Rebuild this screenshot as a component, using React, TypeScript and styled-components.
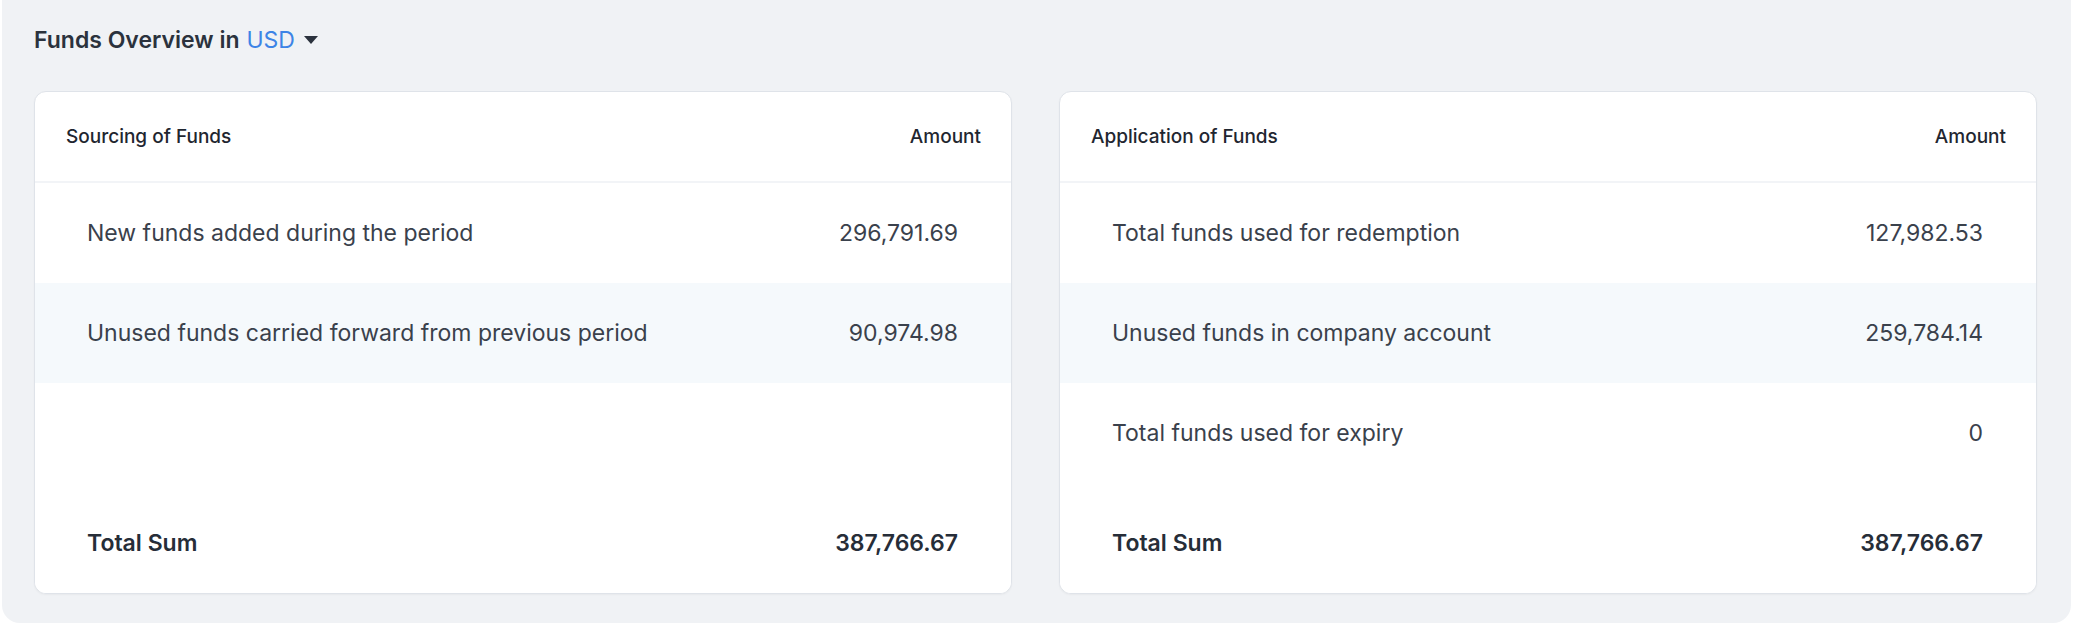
import React from "react";
import styled, { createGlobalStyle } from "styled-components";

const Global = createGlobalStyle`
  html, body { margin: 0; padding: 0; background: #fff; }
  body { font-family: Inter, "Noto Sans", sans-serif; color: #2b323d; }
`;

const Panel = styled.section`
  box-sizing: border-box;
  width: 2069px;
  height: 623px;
  margin-left: 2px;
  background: #f0f2f5;
  border-radius: 0 0 18px 18px;
  padding: 22px 32px 0 32px;
`;

const Title = styled.h2`
  margin: 0;
  font-size: 23px;
  font-weight: 600;
  display: flex;
  align-items: center;
  gap: 7px;
  height: 36px;
`;

const Currency = styled.span`
  color: #3d84e6;
  font-weight: 400;
  display: inline-flex;
  align-items: center;
  gap: 8px;
`;

const Cards = styled.div`
  display: grid;
  grid-template-columns: 978px 978px;
  gap: 47px;
  margin-top: 33px;
`;

const Card = styled.div`
  background: #fff;
  border: 1px solid #dfe3e9;
  border-radius: 12px;
  height: 501px;
  overflow: hidden;
  display: flex;
  flex-direction: column;
  box-shadow: 0 1px 2px rgba(0,0,0,0.04);
`;

const Header = styled.div`
  display: flex;
  justify-content: space-between;
  align-items: center;
  height: 89px;
  padding: 0 30px 0 31px;
  border-bottom: 2px solid #f2f4f7;
  font-size: 19px;
  font-weight: 500;
  color: #1f2630;
`;

const Row = styled.div<{ $striped?: boolean; $total?: boolean }>`
  display: flex;
  justify-content: space-between;
  align-items: center;
  height: 100px;
  padding: 0 53px 0 52px;
  font-size: 23px;
  font-weight: ${(p) => (p.$total ? 600 : 400)};
  background: ${(p) => (p.$striped ? "#f5f9fc" : "#fff")};
  color: ${(p) => (p.$total ? "#262d38" : "#3a414c")};
`;

const Spacer = styled.div`
  flex: 1;
`;

type Item = [string, string];

const FundCard = ({ title, items }: { title: string; items: Item[] }) => (
  <Card>
    <Header>
      <span>{title}</span>
      <span>Amount</span>
    </Header>
    {items.map(([l, v], i) => (
      <Row key={l} $striped={i === 1}>
        <span>{l}</span>
        <span>{v}</span>
      </Row>
    ))}
    <Spacer />
    <Row $total>
      <span>Total Sum</span>
      <span>387,766.67</span>
    </Row>
  </Card>
);

export default function App() {
  return (
    <>
      <Global />
      <Panel>
        <Title>
          Funds Overview in
          <Currency>
            USD
            <svg width="16" height="10" viewBox="0 0 16 10">
              <path d="M1 1h14L8 9z" fill="#2b323d" />
            </svg>
          </Currency>
        </Title>
        <Cards>
          <FundCard
            title="Sourcing of Funds"
            items={[
              ["New funds added during the period", "296,791.69"],
              ["Unused funds carried forward from previous period", "90,974.98"],
            ]}
          />
          <FundCard
            title="Application of Funds"
            items={[
              ["Total funds used for redemption", "127,982.53"],
              ["Unused funds in company account", "259,784.14"],
              ["Total funds used for expiry", "0"],
            ]}
          />
        </Cards>
      </Panel>
    </>
  );
}
